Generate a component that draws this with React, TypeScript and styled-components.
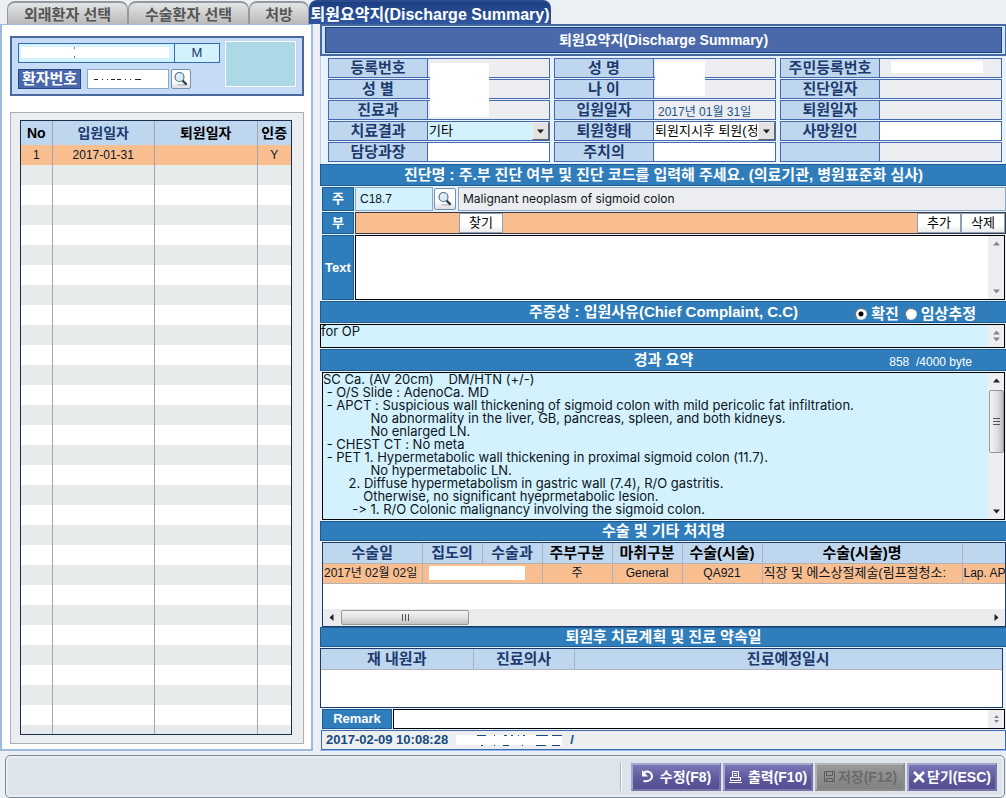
import React from 'react';
import styled, { createGlobalStyle, css } from 'styled-components';

const c = {
  navy: '#1c3a6e',
  ink: '#0c1420',
  line: '#4668ae',
  head: '#bfd7ee',
  cyan: '#d3f2fe',
  grey: '#ecedf0',
  section: '#2f7dba',
  sectionEdge: '#1f5c91',
  orange: '#f8be90',
};

const prose = 'Inter, "Noto Sans CJK KR", sans-serif';

const GlobalStyle = createGlobalStyle`
  *, *::before, *::after { box-sizing: border-box; }
  body {
    margin: 0;
    background: #ecf0f4;
    color: ${c.ink};
    font: 13px/16px "Liberation Sans", "Noto Sans CJK KR", sans-serif;
  }
  button, input, select, textarea { font: inherit; color: inherit; margin: 0; border-radius: 0; }
  table { border-collapse: collapse; table-layout: fixed; width: 100%; }
  h1, h2 { margin: 0; }
`;

const Page = styled.div`
  display: flex;
  flex-direction: column;
  min-height: 100vh;
`;

const TabBar = styled.nav`
  display: flex;
  align-items: flex-end;
  height: 24px;
  padding-left: 7px;
`;

const Tab = styled.button<{ $width: number; $active?: boolean }>`
  width: ${(p) => p.$width}px;
  height: 23px;
  padding: 3px 0 0;
  border: 1px solid #95989c;
  border-width: 2px 1px 0;
  border-radius: 8px 8px 0 0;
  background: linear-gradient(#e3e4e5, #cfcfcf 50%, #b9b9b9);
  color: #555;
  font-size: 15px;
  font-weight: bold;
  line-height: 18px;
  white-space: nowrap;
  ${(p) =>
    p.$active &&
    css`
      height: 24px;
      border-color: #2a4c8c;
      background: linear-gradient(#1d3f82, #2f57a0);
      color: #fff;
      font-size: 16px;
    `}
`;

const Main = styled.main`
  display: flex;
  flex: 1;
  gap: 7px;
`;

const Side = styled.aside`
  display: flex;
  flex-direction: column;
  flex: none;
  width: 313px;
  gap: 16px;
  padding: 11px 7px 5px 8px;
  border: 2px solid #9dbcdb;
  border-top-width: 1px;
  background: #fff;
`;

const PatientCard = styled.section`
  display: grid;
  grid-template-columns: 202px 71px;
  gap: 5px;
  height: 60px;
  padding: 3px 6px;
  border: 2px solid #4c67a0;
  background: #c5dbf6;
`;

const PatientLines = styled.div`
  display: flex;
  flex-direction: column;
  gap: 6px;
  padding-top: 2px;
`;

const NameBox = styled.div`
  display: grid;
  grid-template-columns: 155px 1fr;
  height: 20px;
  border: 1px solid #2f6cb0;
  background: ${c.cyan};
  color: ${c.navy};
  line-height: 18px;
  text-align: center;
`;

const NameBlank = styled.span`
  margin: 3px 5px 4px 2px;
  background:
    linear-gradient(#4d86bd, #4d86bd) 53px 0 / 1px 2px no-repeat,
    linear-gradient(#4d86bd, #4d86bd) 53px 100% / 1px 2px no-repeat,
    #fff;
`;

const SexCell = styled.span`
  border-left: 1px solid #2f6cb0;
`;

const NumberLine = styled.div`
  display: flex;
  height: 20px;
`;

const NumberLabel = styled.label`
  width: 63px;
  margin-right: 6px;
  border: 1px solid #24478c;
  background: #4a68aa;
  color: #fff;
  font-size: 15px;
  font-weight: bold;
  line-height: 18px;
  text-align: center;
`;

const NumberField = styled.span`
  display: grid;
  align-items: center;
  width: 82px;
  margin-right: 2px;
  border: 1px solid #8fa7c8;
  background: #fff;

  > * {
    grid-area: 1 / 1;
  }
`;

const BareInput = styled.input`
  width: 100%;
  height: 100%;
  padding: 0;
  border: 0;
  background: transparent;
`;

const IconButton = styled.button<{ $wide?: boolean }>`
  display: grid;
  place-items: center;
  align-self: center;
  flex: none;
  width: ${(p) => (p.$wide ? 22 : 20)}px;
  height: ${(p) => (p.$wide ? 22 : 20)}px;
  padding: 0;
  border: 1px solid #7590b0;
  border-radius: 2px;
  background: linear-gradient(#fff 60%, #dde0e4);
`;

const Photo = styled.div`
  height: 46px;
  border: 1px solid #fff;
  background: #add8e6;
  outline: 1px solid #bfd9ee;
`;

const VisitFrame = styled.section`
  display: flex;
  flex: 1 1 0px;
  min-height: 0;
  padding: 7px 11px 8px 9px;
  border: 1px solid #abadba;
  background: #ecedef;
`;

const VisitScroll = styled.div`
  flex: 1;
  height: auto;
  min-height: 0;
  overflow: hidden;
  border: 1px solid #1b2e50;
  background: #fff;
`;

const VisitTable = styled.table`
  th,
  td {
    height: 20px;
    padding: 0;
    border-right: 1px solid #a3a7ac;
    text-align: center;
    font-size: 12px;
  }
  th {
    height: 24px;
    background: ${c.head};
    font-size: 14px;
    white-space: nowrap;
  }
  th:last-child,
  td:last-child {
    border-right: 0;
  }
  tbody tr:nth-child(even) {
    background: #e8ebec;
  }
  tbody tr:first-child {
    background: ${c.orange};
  }
`;

const Th = styled.th<{ $blue?: boolean }>`
  color: ${(p) => (p.$blue ? c.navy : '#000')};
`;

const Summary = styled.section`
  display: flex;
  flex-direction: column;
  flex: 1;
  min-width: 0;
  background: #e6f3fd;
  border-bottom: 1px solid #8fb9f4;
`;

const TitleFrame = styled.header`
  padding: 1px 3px;
  border: 2px solid #48699f;
  border-right-width: 1px;
  background: #c9e5fb;
`;

const Title = styled.h1`
  height: 26px;
  border: 1px solid #22407c;
  background: #4a69aa;
  color: #fff;
  font-size: 14px;
  line-height: 24px;
  text-align: center;
`;

const Fields = styled.div`
  display: grid;
  grid-template-columns: repeat(3, 1fr);
  gap: 1px 4px;
  padding: 2px 4px 2px 7px;
  border-left: 1px solid #c2cede;
`;

const Field = styled.div`
  position: relative;
  display: grid;
  grid-template-columns: 99px minmax(0, 1fr);
  height: 20px;
  border: 1px solid ${c.line};
`;

const FieldLabel = styled.label`
  border-right: 1px solid ${c.line};
  background: ${c.head};
  color: ${c.navy};
  font-size: 15px;
  font-weight: bold;
  line-height: 17px;
  text-align: center;
  white-space: pre;
`;

const FieldInput = styled.input<{ $white?: boolean }>`
  width: 100%;
  height: 18px;
  padding: 0 4px;
  border: 0;
  background: ${(p) => (p.$white ? '#fff' : c.grey)};
  color: #1d5287;
  font-size: 12px;
`;

const SelectBox = styled.span<{ $cyan?: boolean }>`
  display: grid;
  grid-template-columns: minmax(0, 1fr) 17px;
  height: 18px;
  background: ${(p) => (p.$cyan ? c.cyan : '#fff')};
`;

const Select = styled.select`
  grid-area: 1 / 1 / 2 / 3;
  width: 100%;
  height: 18px;
  padding: 0 18px 0 1px;
  border: 0;
  appearance: none;
  background: transparent;
  color: #000;
  font-size: 13px;
  line-height: 18px;
  text-overflow: clip;
`;

const SelectArrow = styled.span`
  grid-area: 1 / 2;
  display: grid;
  place-items: center;
  border: 1px solid #eee;
  border-right-color: #666;
  border-bottom-color: #666;
  background: #e2e2e0;
  pointer-events: none;
`;

const Mask = styled.span<{ $x: number; $y: number; $w: number; $h: number }>`
  position: absolute;
  z-index: 1;
  left: ${(p) => p.$x}px;
  top: ${(p) => p.$y}px;
  width: ${(p) => p.$w}px;
  height: ${(p) => p.$h}px;
  background: #fff;
`;

const Section = styled.h2<{ $short?: boolean }>`
  position: relative;
  height: ${(p) => (p.$short ? 20 : 22)}px;
  margin-bottom: 1px;
  border: 1px solid ${c.sectionEdge};
  border-right: 0;
  background: ${c.section};
  color: #fff;
  font-size: 15px;
  line-height: ${(p) => (p.$short ? 18 : 20)}px;
  text-align: center;
  white-space: nowrap;
`;

const SectionAside = styled.div`
  position: absolute;
  right: 30px;
  top: 2px;
  display: flex;
  gap: 6px;
`;

const Bytes = styled.span`
  padding-right: 4px;
  font-size: 12px;
  font-weight: normal;
  white-space: pre;
`;

const RadioLabel = styled.label`
  display: flex;
  align-items: center;
  gap: 4px;
  height: 20px;
`;

const Radio = styled.input`
  width: 12px;
  height: 12px;
  appearance: none;
  border: 1px solid #777;
  border-right-color: #ddd;
  border-bottom-color: #ddd;
  border-radius: 50%;
  background: #fff;

  &:checked {
    background: radial-gradient(circle, #000 0 2px, #fff 3px);
  }
`;

const Line = styled.div<{ $height: number }>`
  display: flex;
  height: ${(p) => p.$height}px;
  margin-bottom: 1px;
  padding-left: 2px;
`;

const LineLabel = styled.label<{ $wide?: boolean }>`
  display: grid;
  place-items: center;
  flex: none;
  width: ${(p) => (p.$wide ? 70 : 32)}px;
  margin-right: 1px;
  border: 1px solid ${c.sectionEdge};
  background: ${c.section};
  color: #fff;
  font-size: 13px;
  font-weight: bold;
`;

const CodeInput = styled.input`
  width: 78px;
  margin-right: 1px;
  padding: 0 4px;
  border: 1px solid #87a5c4;
  background: ${c.cyan};
  font-size: 12px;
`;

const NameInput = styled.input`
  flex: 1;
  min-width: 0;
  margin-left: 2px;
  padding: 0 4px;
  border: 1px solid #87a5c4;
  background: ${c.grey};
  font-family: ${prose};
  font-size: 12px;
`;

const SubBar = styled.div`
  display: flex;
  flex: 1;
  padding-left: 103px;
  border: 1px solid #3c3a40;
  background: ${c.orange};
`;

const SmallButton = styled.button`
  width: 44px;
  height: 20px;
  padding: 0;
  border: 1px solid #8aa0b8;
  background: linear-gradient(#fff 60%, #e9ebee);
  color: #000;
  line-height: 18px;

  &:nth-child(2) {
    margin-left: auto;
  }
`;

const TextFrame = styled.div<{ $height?: number; $cyan?: boolean; $inset?: boolean }>`
  display: flex;
  flex: ${(p) => (p.$height ? 'none' : 1)};
  height: ${(p) => (p.$height ? `${p.$height}px` : 'auto')};
  margin: 0 1px ${(p) => (p.$height ? 1 : 0)}px ${(p) => (p.$inset ? 2 : 0)}px;
  border: 1px solid #000;
  background: ${(p) => (p.$cyan ? c.cyan : '#fff')};
`;

const TextArea = styled.textarea`
  flex: 1;
  min-width: 0;
  padding: 0;
  border: 0;
  outline: 0;
  resize: none;
  overflow: hidden;
  background: transparent;
  font-family: ${prose};
  font-size: 13px;
  font-variant-ligatures: none;
  line-height: 13px;
  white-space: pre;
`;

const VBar = styled.div`
  display: flex;
  flex-direction: column;
  flex: none;
  align-items: center;
  width: 16px;
  padding: 4px 0;
  background: #eeeef0;

  > svg:last-child {
    margin-top: auto;
  }
`;

const VThumb = styled.span`
  display: grid;
  place-items: center;
  width: 15px;
  height: 63px;
  margin-top: 6px;
  border: 1px solid #979797;
  border-radius: 2px;
  background: linear-gradient(90deg, #f6f6f6, #dcdcde 60%, #bcbcc2);
`;

const OpFrame = styled.div`
  display: flex;
  flex-direction: column;
  height: 85px;
  margin-left: 2px;
  border: 1px solid #1d3b68;
  background: #fff;
  overflow: hidden;
`;

const GridTable = styled.table`
  th,
  td {
    height: 20px;
    padding: 0;
    overflow: hidden;
    border-right: 1px solid #a7b4c0;
    border-bottom: 1px solid #b3b3b3;
    text-align: center;
    white-space: nowrap;
    font-size: 12px;
  }
  th {
    background: ${c.head};
    font-size: 15px;
  }
  td {
    background: ${c.orange};
  }
  th:last-child,
  td:last-child {
    border-right: 0;
  }
`;

const TextCell = styled.td<{ $large?: boolean }>`
  && {
    padding-left: 1px;
    text-align: left;
    font-size: ${(p) => (p.$large ? 13 : 12)}px;
  }
`;

const Blank = styled.span`
  display: block;
  height: 14px;
  margin: 0 17px 0 6px;
  background: #fff;
`;

const HBar = styled.div`
  display: flex;
  align-items: center;
  height: 17px;
  margin-top: auto;
  padding: 0 5px;
  background: #ececee;

  > svg:last-child {
    margin-left: auto;
  }
`;

const HThumb = styled.span`
  display: grid;
  place-items: center;
  width: 128px;
  height: 15px;
  margin-left: 6px;
  border: 1px solid #979797;
  border-radius: 2px;
  background: linear-gradient(#f6f6f6, #dcdcde 60%, #c2c2c6);
`;

const PlanFrame = styled.div`
  height: 60px;
  margin: 0 3px 1px 0;
  border: 1px solid #1d3b68;
  background: #fff;
`;

const Stamp = styled.div`
  display: flex;
  align-items: center;
  gap: 8px;
  height: 20px;
  margin-left: 1px;
  padding-left: 4px;
  border: 1px solid #3f68b0;
  background: #edeef0;
  color: #164a80;
  font-weight: bold;
  font-size: 13px;
`;

const Footer = styled.footer`
  display: flex;
  align-items: center;
  justify-content: flex-end;
  gap: 2px;
  height: 43px;
  margin: 4px 1px 0 5px;
  padding-right: 7px;
  border: 1px solid #7b8996;
  border-radius: 5px;
  background: #dde4eb;
  box-shadow: inset 0 0 0 2px #e9eef4;
`;

const Divider = styled.span`
  width: 2px;
  height: 28px;
  margin-right: 7px;
  border-left: 1px solid #a9b4c0;
  background: #fff;
`;

const Action = styled.button<{ $tight?: boolean }>`
  display: flex;
  align-items: center;
  justify-content: center;
  gap: ${(p) => (p.$tight ? 2 : 6)}px;
  width: 90px;
  height: 28px;
  padding: 0;
  border: 2px solid #a5a5cc;
  border-right-color: #7775a8;
  border-bottom-color: #7775a8;
  background: linear-gradient(#7a77b6, #5c569b 60%, #564f92);
  color: #fff;
  font-size: 14px;
  font-weight: bold;
  white-space: nowrap;

  svg {
    flex: none;
  }

  &:disabled {
    border-color: #b4b4b4 #8c8c8c #8c8c8c #b4b4b4;
    background: linear-gradient(#999, #828282);
    color: #6b6b6b;
  }
`;

function Lens() {
  return (
    <svg width="16" height="16" viewBox="0 0 16 16" fill="none" aria-hidden="true">
      <ellipse cx="9" cy="14" rx="5" ry="1" fill="#c6c8ca" />
      <path d="M9 9l4 4" stroke="#2f3c4b" strokeWidth="2.4" strokeLinecap="round" />
      <circle cx="6.5" cy="6" r="4.5" fill="#d9edf8" stroke="#58738c" strokeWidth="1.2" />
      <path d="M4 6a2 2 0 0 1 2-2" stroke="#fff" />
    </svg>
  );
}

function Arrow({ dir, dim, size = 7 }: { dir: 'up' | 'down' | 'left' | 'right'; dim?: boolean; size?: number }) {
  const angle = { up: 0, right: 90, down: 180, left: 270 }[dir];
  return (
    <svg width={size} height={size} viewBox="0 0 7 7" aria-hidden="true">
      <path d="M0 5.5L3.5 1.5L7 5.5z" fill={dim ? '#85878c' : '#222'} transform={`rotate(${angle} 3.5 3.5)`} />
    </svg>
  );
}

function Grip({ turned }: { turned?: boolean }) {
  return (
    <svg width="8" height="8" viewBox="0 0 8 8" stroke="#555" aria-hidden="true">
      <path d={turned ? 'M1.5 0v7M4.5 0v7M7.5 0v7' : 'M1 0.5h7M1 3.5h7M1 6.5h7'} />
    </svg>
  );
}

function VerticalBar({ dim, thumb }: { dim?: boolean; thumb?: boolean }) {
  return (
    <VBar>
      <Arrow dir="up" dim={dim} />
      {thumb && (
        <VThumb>
          <Grip />
        </VThumb>
      )}
      <Arrow dir="down" dim={dim} />
    </VBar>
  );
}

type FieldSpec = {
  id: string;
  label: string;
  value?: string;
  white?: boolean;
  options?: string[];
  cyan?: boolean;
  mask?: [number, number, number, number];
};

const fields: FieldSpec[] = [
  { id: 'regNo', label: '등록번호', mask: [101, 4, 59, 54] },
  { id: 'name', label: '성 명', mask: [100, 2, 50, 35] },
  { id: 'residentNo', label: '주민등록번호', mask: [110, 2, 92, 12] },
  { id: 'sex', label: '성 별' },
  { id: 'age', label: '나 이' },
  { id: 'diagnosed', label: '진단일자' },
  { id: 'dept', label: '진료과' },
  { id: 'admitted', label: '입원일자', value: '2017년 01월 31일' },
  { id: 'discharged', label: '퇴원일자' },
  { id: 'outcome', label: '치료결과', options: ['기타', '완쾌', '호전'], cyan: true },
  { id: 'dischargeType', label: '퇴원형태', options: ['퇴원지시후 퇴원(정상퇴원)', '전원'] },
  { id: 'deathCause', label: '사망원인', white: true },
  { id: 'chief', label: '담당과장', white: true },
  { id: 'attending', label: '주치의', white: true },
  { id: 'extra', label: '' },
];

const course = [
  'SC Ca. (AV 20cm)    DM/HTN (+/-)',
  ' - O/S Slide : AdenoCa. MD',
  ' - APCT : Suspicious wall thickening of sigmoid colon with mild pericolic fat infiltration.',
  '             No abnormality in the liver, GB, pancreas, spleen, and both kidneys.',
  '             No enlarged LN.',
  ' - CHEST CT : No meta',
  ' - PET 1. Hypermetabolic wall thickening in proximal sigmoid colon (11.7).',
  '             No hypermetabolic LN.',
  '       2. Diffuse hypermetabolism in gastric wall (7.4), R/O gastritis.',
  '           Otherwise, no significant hyeprmetabolic lesion.',
  '        -> 1. R/O Colonic malignancy involving the sigmoid colon.',
].join('\n');

const emptyVisits = Array.from({ length: 40 }, (_, i) => i);

function FormField({ spec }: { spec: FieldSpec }) {
  return (
    <Field>
      <FieldLabel htmlFor={spec.id}>{spec.label}</FieldLabel>
      {spec.options ? (
        <SelectBox $cyan={spec.cyan}>
          <Select id={spec.id}>
            {spec.options.map((o) => (
              <option key={o}>{o}</option>
            ))}
          </Select>
          <SelectArrow>
            <Arrow dir="down" />
          </SelectArrow>
        </SelectBox>
      ) : (
        <FieldInput id={spec.id} $white={spec.white} readOnly={!spec.white} defaultValue={spec.value} />
      )}
      {spec.mask && <Mask $x={spec.mask[0]} $y={spec.mask[1]} $w={spec.mask[2]} $h={spec.mask[3]} />}
    </Field>
  );
}

export default function App() {
  return (
    <Page>
      <GlobalStyle />
      <TabBar>
        <Tab $width={121}>외래환자 선택</Tab>
        <Tab $width={121}>수술환자 선택</Tab>
        <Tab $width={60}>처방</Tab>
        <Tab $width={242} $active>
          퇴원요약지(Discharge Summary)
        </Tab>
      </TabBar>

      <Main>
        <Side>
          <PatientCard>
            <PatientLines>
              <NameBox>
                <NameBlank />
                <SexCell>M</SexCell>
              </NameBox>
              <NumberLine>
                <NumberLabel htmlFor="patientNo">환자번호</NumberLabel>
                <NumberField>
                  <BareInput id="patientNo" />
                  <svg width="60" height="6" viewBox="0 0 60 6" stroke="#222" aria-hidden="true">
                    <path d="M6 3.5h4M14 3.5h1M19 3.5h1M23 3.5h4M29 3.5h4M37 3.5h1M42 3.5h1M47 3.5h6" />
                  </svg>
                </NumberField>
                <IconButton aria-label="환자 검색">
                  <Lens />
                </IconButton>
              </NumberLine>
            </PatientLines>
            <Photo />
          </PatientCard>

          <VisitFrame>
            <VisitScroll>
              <VisitTable>
                <colgroup>
                  <col style={{ width: 31 }} />
                  <col />
                  <col />
                  <col style={{ width: 34 }} />
                </colgroup>
                <thead>
                  <tr>
                    <Th>No</Th>
                    <Th $blue>입원일자</Th>
                    <Th>퇴원일자</Th>
                    <Th>인증</Th>
                  </tr>
                </thead>
                <tbody>
                  <tr>
                    <td>1</td>
                    <td>2017-01-31</td>
                    <td />
                    <td>Y</td>
                  </tr>
                  {emptyVisits.map((i) => (
                    <tr key={i}>
                      <td />
                      <td />
                      <td />
                      <td />
                    </tr>
                  ))}
                </tbody>
              </VisitTable>
            </VisitScroll>
          </VisitFrame>
        </Side>

        <Summary>
          <TitleFrame>
            <Title>퇴원요약지(Discharge Summary)</Title>
          </TitleFrame>
          <Fields>
            {fields.map((f) => (
              <FormField key={f.id} spec={f} />
            ))}
          </Fields>

          <Section>진단명 : 주.부 진단 여부 및 진단 코드를 입력해 주세요. (의료기관, 병원표준화 심사)</Section>
          <Line $height={24}>
            <LineLabel htmlFor="mainCode">주</LineLabel>
            <CodeInput id="mainCode" defaultValue="C18.7" />
            <IconButton $wide aria-label="진단 검색">
              <Lens />
            </IconButton>
            <NameInput aria-label="진단명" readOnly defaultValue="Malignant neoplasm of sigmoid colon" />
          </Line>
          <Line $height={22}>
            <LineLabel as="span">부</LineLabel>
            <SubBar>
              <SmallButton>찾기</SmallButton>
              <SmallButton>추가</SmallButton>
              <SmallButton>삭제</SmallButton>
            </SubBar>
          </Line>
          <Line $height={65}>
            <LineLabel htmlFor="diagText">Text</LineLabel>
            <TextFrame>
              <TextArea id="diagText" />
              <VerticalBar dim />
            </TextFrame>
          </Line>

          <Section>
            주증상 : 입원사유(Chief Complaint, C.C)
            <SectionAside>
              <RadioLabel>
                <Radio type="radio" name="certainty" defaultChecked />
                확진
              </RadioLabel>
              <RadioLabel>
                <Radio type="radio" name="certainty" />
                임상추정
              </RadioLabel>
            </SectionAside>
          </Section>
          <TextFrame $height={24} $cyan>
            <TextArea aria-label="주증상" defaultValue="for OP" />
            <VerticalBar dim />
          </TextFrame>

          <Section>
            경과 요약
            <SectionAside>
              <Bytes>858  /4000 byte</Bytes>
            </SectionAside>
          </Section>
          <TextFrame $height={148} $cyan $inset>
            <TextArea aria-label="경과 요약" defaultValue={course} />
            <VerticalBar thumb />
          </TextFrame>

          <Section $short>수술 및 기타 처치명</Section>
          <OpFrame>
            <GridTable>
              <colgroup>
                <col style={{ width: 99 }} />
                <col style={{ width: 60 }} />
                <col style={{ width: 60 }} />
                <col style={{ width: 70 }} />
                <col style={{ width: 70 }} />
                <col style={{ width: 80 }} />
                <col style={{ width: 200 }} />
                <col />
              </colgroup>
              <thead>
                <tr>
                  <Th $blue>수술일</Th>
                  <Th $blue>집도의</Th>
                  <Th $blue>수술과</Th>
                  <Th>주부구분</Th>
                  <Th>마취구분</Th>
                  <Th>수술(시술)</Th>
                  <Th>수술(시술)명</Th>
                  <Th />
                </tr>
              </thead>
              <tbody>
                <tr>
                  <TextCell>2017년 02월 02일</TextCell>
                  <td colSpan={2}>
                    <Blank />
                  </td>
                  <td>주</td>
                  <td>General</td>
                  <td>QA921</td>
                  <TextCell $large>직장 및 에스상절제술(림프절청소:</TextCell>
                  <TextCell>Lap. AP</TextCell>
                </tr>
              </tbody>
            </GridTable>
            <HBar>
              <Arrow dir="left" />
              <HThumb>
                <Grip turned />
              </HThumb>
              <Arrow dir="right" />
            </HBar>
          </OpFrame>

          <Section $short>퇴원후 치료계획 및 진료 약속일</Section>
          <PlanFrame>
            <GridTable>
              <colgroup>
                <col style={{ width: 152 }} />
                <col style={{ width: 101 }} />
                <col />
              </colgroup>
              <thead>
                <tr>
                  <Th $blue>재 내원과</Th>
                  <Th $blue>진료의사</Th>
                  <Th $blue>진료예정일시</Th>
                </tr>
              </thead>
            </GridTable>
          </PlanFrame>
          <Line $height={20}>
            <LineLabel $wide htmlFor="remark">
              Remark
            </LineLabel>
            <TextFrame>
              <TextArea id="remark" />
              <VerticalBar dim />
            </TextFrame>
          </Line>
          <Stamp>
            2017-02-09 10:08:28
            <svg width="106" height="14" viewBox="0 0 106 14" aria-hidden="true">
              <path d="M0 2h106v10H0z" fill="#fff" />
              <path
                d="M21 2.5h9M38 2.5h1M48 2.5h3M55 2.5h2M62 2.5h1M67 2.5h2M80 2.5h12M96 2.5h10M25 12.5h2M38 12.5h1M47 12.5h6M66 12.5h1M80 12.5h10M96 12.5h8"
                stroke="#164a80"
              />
            </svg>
            <span>/</span>
          </Stamp>
        </Summary>
      </Main>

      <Footer>
        <Divider />
        <Action>
          <svg width="13" height="13" viewBox="0 0 13 13" fill="none" stroke="#fff" strokeWidth="2" aria-hidden="true">
            <path d="M3 2.500Q6 0.800 8.500 2.200A4.500 4.500 0 0 1 9 10Q6.500 11.800 2.500 11" />
            <path d="M1 0v6.500h6z" fill="#fff" stroke="none" />
          </svg>
          수정(F8)
        </Action>
        <Action>
          <svg width="13" height="13" viewBox="0 0 13 13" fill="none" stroke="#fff" aria-hidden="true">
            <path d="M3.500 7.500v-6h6v6M5 3.500h3M5 5.500h3M1.500 7.500h10v3h-10zM0 12.500h13M9 9h1" />
          </svg>
          출력(F10)
        </Action>
        <Action disabled $tight>
          <svg width="13" height="13" viewBox="0 0 13 13" fill="none" stroke="#5c5c5c" aria-hidden="true">
            <path d="M1.500 1.500h10v10h-10zM3.500 1.500v4h6v-4M3.500 11.500v-3h6v3" />
          </svg>
          저장(F12)
        </Action>
        <Action $tight>
          <svg width="12" height="12" viewBox="0 0 12 12" stroke="#fff" strokeWidth="2.600" aria-hidden="true">
            <path d="M1 1l10 10M11 1L1 11" />
          </svg>
          닫기(ESC)
        </Action>
      </Footer>
    </Page>
  );
}
